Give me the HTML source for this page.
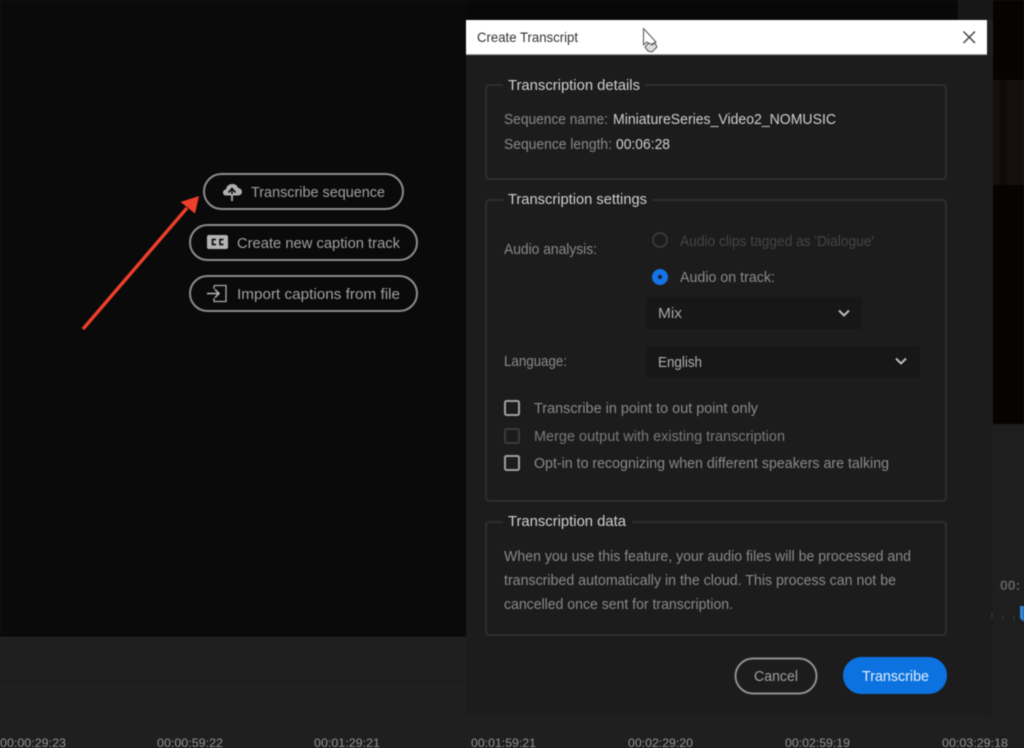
<!DOCTYPE html>
<html><head><meta charset="utf-8"><style>
html,body{margin:0;padding:0;background:#1f1f1f;width:1024px;height:748px;overflow:hidden}
svg{display:block;filter:blur(.5px)}
text{font-family:"Liberation Sans",sans-serif;font-size:15px}
</style></head><body>
<svg width="1024" height="748" viewBox="0 0 1024 748" xmlns="http://www.w3.org/2000/svg">
<rect width="1024" height="748" fill="#1f1f1f"/>
<rect x="0" y="0" width="466" height="637" fill="#0a0a0b"/>
<rect x="466" y="0" width="492" height="20" fill="#080809"/>
<rect x="958" y="0" width="35" height="20" fill="#171717"/>
<rect x="993" y="0" width="31" height="424" fill="#060403"/>
<rect x="993" y="80" width="31" height="105" fill="#15100d"/>
<rect x="1000" y="80" width="7" height="105" fill="#100b09"/>
<rect x="990" y="424" width="34" height="324" fill="#1e1e1e"/>
<rect x="0" y="637" width="466" height="1" fill="#272727"/>
<rect x="0" y="681" width="464" height="2" fill="#1b1b1b"/>
<rect x="466" y="55" width="527" height="660" fill="#1c1c1d"/>
<rect x="466" y="20" width="521" height="35" fill="#fff"/>
<rect x="466" y="54" width="521" height="1" fill="#aaa"/>
<text x="477" y="42" style="font-size:14px" fill="#333" textLength="101" lengthAdjust="spacingAndGlyphs">Create Transcript</text>
<path d="M963.500 31.500L975 43M975 31.500L963.500 43" stroke="#444" stroke-width="1.500" fill="none"/>
<path d="M643.500 28.500V45L647 42L650 45L656 42Z" fill="#fff" stroke="#666" stroke-width="1.200" stroke-linejoin="round"/>
<path d="M645 47L649 43L652 45L655 43L657 47L652 52L648 51Z" fill="#ddd" stroke="#555" stroke-width="1"/>

<g fill="none" stroke="#2e2e2e" stroke-width="2">
<path d="M503 85H490Q486 85 486 89V175Q486 179 490 179H942Q946 179 946 175V89Q946 85 942 85H645"/>
<path d="M503 200H490Q486 200 486 204V497Q486 501 490 501H942Q946 501 946 497V204Q946 200 942 200H652"/>
<path d="M503 522H490Q486 522 486 526V631Q486 635 490 635H942Q946 635 946 631V526Q946 522 942 522H632"/>
</g>
<g fill="#d0d0d0">
<text x="508" y="90" textLength="132" lengthAdjust="spacingAndGlyphs">Transcription details</text>
<text x="508" y="204" textLength="139" lengthAdjust="spacingAndGlyphs">Transcription settings</text>
<text x="508" y="526" textLength="118" lengthAdjust="spacingAndGlyphs">Transcription data</text>
</g>
<g fill="#8a8a8a">
<text x="504" y="124" textLength="104" lengthAdjust="spacingAndGlyphs">Sequence name:</text>
<text x="504" y="149" textLength="108" lengthAdjust="spacingAndGlyphs">Sequence length:</text>
<text x="504" y="254" textLength="93" lengthAdjust="spacingAndGlyphs">Audio analysis:</text>
<text x="504" y="366" textLength="63" lengthAdjust="spacingAndGlyphs">Language:</text>
<text x="680" y="282" textLength="95" lengthAdjust="spacingAndGlyphs">Audio on track:</text>
<text x="534" y="413" textLength="224" lengthAdjust="spacingAndGlyphs">Transcribe in point to out point only</text>
<text x="534" y="441" textLength="251" lengthAdjust="spacingAndGlyphs" fill="#7a7a7a">Merge output with existing transcription</text>
<text x="534" y="468" textLength="355" lengthAdjust="spacingAndGlyphs">Opt-in to recognizing when different speakers are talking</text>
<text x="504" y="561" textLength="407" lengthAdjust="spacingAndGlyphs">When you use this feature, your audio files will be processed and</text>
<text x="504" y="585" textLength="392" lengthAdjust="spacingAndGlyphs">transcribed automatically in the cloud. This process can not be</text>
<text x="504" y="609" textLength="229" lengthAdjust="spacingAndGlyphs">cancelled once sent for transcription.</text>
</g>
<text x="680" y="246" textLength="194" lengthAdjust="spacingAndGlyphs" fill="#454545">Audio clips tagged as 'Dialogue'</text>
<g fill="#cfcfcf">
<text x="613" y="124" textLength="223" lengthAdjust="spacingAndGlyphs">MiniatureSeries_Video2_NOMUSIC</text>
<text x="616" y="149" textLength="54" lengthAdjust="spacingAndGlyphs">00:06:28</text>
</g>
<circle cx="660" cy="240" r="7" fill="none" stroke="#3a3a3a" stroke-width="2"/>
<circle cx="660" cy="277" r="8" fill="#1473e6"/>
<circle cx="660" cy="277" r="2" fill="#123"/>
<rect x="645" y="296" width="218" height="34" rx="2" fill="#171717" stroke="#1f1f1f"/>
<rect x="645" y="345" width="276" height="34" rx="2" fill="#171717" stroke="#1f1f1f"/>
<text x="658" y="318" fill="#a8a8a8" textLength="24" lengthAdjust="spacingAndGlyphs">Mix</text>
<text x="658" y="367" fill="#b0b0b0" textLength="44" lengthAdjust="spacingAndGlyphs">English</text>
<path d="M839 310.500L844 315.500L849 310.500M896 358.500L901 363.500L906 358.500" fill="none" stroke="#bbb" stroke-width="2"/>
<g fill="none" stroke-width="2">
<rect x="505" y="401" width="14" height="14" rx="1.500" stroke="#a0a0a0"/>
<rect x="505" y="429" width="14" height="14" rx="1.500" stroke="#3c3c3c"/>
<rect x="505" y="456" width="14" height="14" rx="1.500" stroke="#a0a0a0"/>
</g>
<rect x="735.500" y="658.500" width="81" height="35" rx="17.500" fill="none" stroke="#8f8f8f" stroke-width="2"/>
<text x="754" y="681" fill="#a0a0a0" textLength="44" lengthAdjust="spacingAndGlyphs">Cancel</text>
<rect x="843" y="657" width="104" height="37" rx="18.500" fill="#0b72e0"/>
<text x="862" y="681" fill="#e6f0fb" textLength="67" lengthAdjust="spacingAndGlyphs">Transcribe</text>

<g fill="none" stroke="#8c8c8c" stroke-width="2">
<rect x="204" y="174" width="199" height="35" rx="17.500"/>
<rect x="190" y="225" width="227" height="35" rx="17.500"/>
<rect x="190" y="276" width="227" height="35" rx="17.500"/>
</g>
<g fill="#a0a0a0">
<text x="251" y="197" textLength="134" lengthAdjust="spacingAndGlyphs">Transcribe sequence</text>
<text x="237" y="248" textLength="163" lengthAdjust="spacingAndGlyphs">Create new caption track</text>
<text x="237" y="299" textLength="163" lengthAdjust="spacingAndGlyphs">Import captions from file</text>
</g>
<path d="M226 195.500C222 195.500 222 189.500 226 189.500C226.500 183 236.500 182 238 188C243 188 243.500 195.500 238 195.500Z" fill="#b0b0b0"/>
<path d="M232 200V190M228.500 192.500L232 188.500L235.500 192.500" fill="none" stroke="#0a0a0b" stroke-width="1.600"/>
<path d="M232 201V194" stroke="#b0b0b0" stroke-width="1.800"/>
<rect x="207" y="235" width="21" height="14" rx="2" fill="#b4b4b4"/>
<path d="M216 239.500H212.500V244.500H216M223.500 239.500H220V244.500H223.500" fill="none" stroke="#111" stroke-width="1.700"/>
<path d="M214 285.500H226V301.500H214V298M214 289V285.500" fill="none" stroke="#aaa" stroke-width="1.300"/>
<path d="M207 293.500H219M215 289.500L219 293.500L215 297.500" fill="none" stroke="#bbb" stroke-width="1.500"/>

<path d="M83 329L187 208" stroke="#ee3f2a" stroke-width="3.400" fill="none"/>
<path d="M199 196L180.500 202L195 213.500Z" fill="#ee3f2a"/>

<g fill="#929292">
<text x="0" y="747" style="font-size:12px" textLength="66" lengthAdjust="spacingAndGlyphs">00:00:29:23</text>
<text x="157" y="747" style="font-size:12px" textLength="66" lengthAdjust="spacingAndGlyphs">00:00:59:22</text>
<text x="314" y="747" style="font-size:12px" textLength="66" lengthAdjust="spacingAndGlyphs">00:01:29:21</text>
<text x="471" y="747" style="font-size:12px" textLength="65" lengthAdjust="spacingAndGlyphs">00:01:59:21</text>
<text x="628" y="747" style="font-size:12px" textLength="65" lengthAdjust="spacingAndGlyphs">00:02:29:20</text>
<text x="785" y="747" style="font-size:12px" textLength="65" lengthAdjust="spacingAndGlyphs">00:02:59:19</text>
<text x="942" y="747" style="font-size:12px" textLength="66" lengthAdjust="spacingAndGlyphs">00:03:29:18</text>
</g>
<text x="1000" y="590" fill="#5f5f5f" style="font-size:14px;font-weight:bold">00:</text>
<path d="M1020 606H1024V622L1020 618Z" fill="#2f86dc"/>
<path d="M992 612V618M1003 616V620M1014 616V620" stroke="#3a3a3a" stroke-width="1"/>
</svg>
</body></html>
